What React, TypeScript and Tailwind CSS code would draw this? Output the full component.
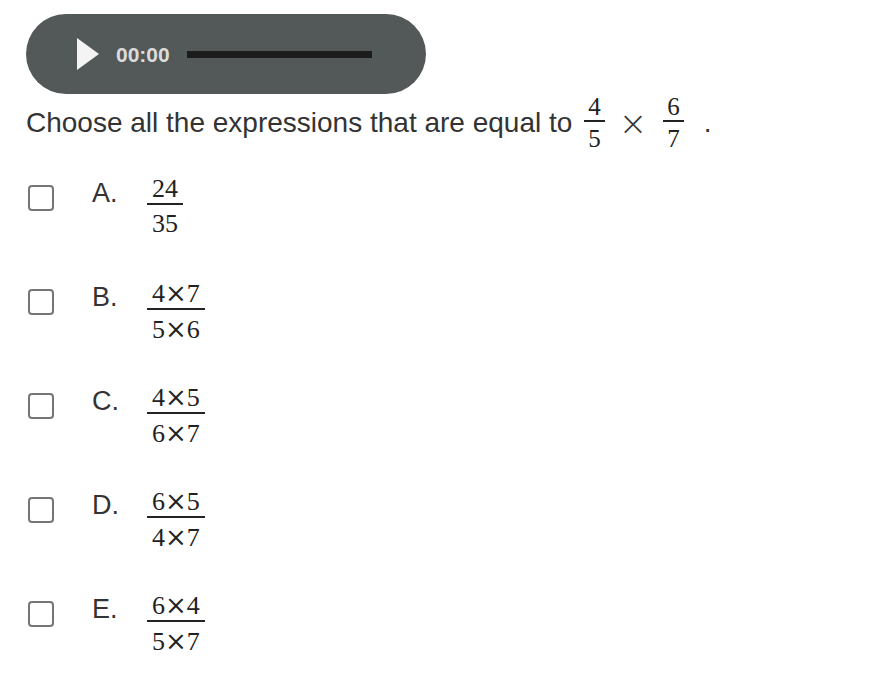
import React from "react";

const serif = { fontFamily: '"Liberation Serif", "Times New Roman", serif' };
const timesFont = { fontFamily: '"DejaVu Serif", serif' };

function Expr({ s }: { s: string }) {
  const parts = s.split("×");
  return (
    <>
      {parts.map((p, i) => (
        <React.Fragment key={i}>
          {i > 0 && <span style={timesFont}>×</span>}
          {p}
        </React.Fragment>
      ))}
    </>
  );
}

function Frac({
  n,
  d,
  size = "text-[26px]",
  lh = "leading-[28px]",
  pad = "px-[5px]",
  gap = "pt-[5px]",
}: {
  n: string;
  d: string;
  size?: string;
  lh?: string;
  pad?: string;
  gap?: string;
}) {
  return (
    <span className={`inline-flex flex-col items-center ${size} ${lh} text-[#222]`} style={serif}>
      <span className={`${pad} border-b-2 border-[#222]`}>
        <Expr s={n} />
      </span>
      <span className={`${pad} ${gap}`}>
        <Expr s={d} />
      </span>
    </span>
  );
}

const options = [
  { l: "A.", n: "24", d: "35" },
  { l: "B.", n: "4×7", d: "5×6" },
  { l: "C.", n: "4×5", d: "6×7" },
  { l: "D.", n: "6×5", d: "4×7" },
  { l: "E.", n: "6×4", d: "5×7" },
];

export default function App() {
  return (
    <div
      className="w-[884px] h-[700px] bg-white pl-[26px] pt-[14px] text-[#333]"
      style={{ fontFamily: '"Liberation Sans", Arial, Helvetica, sans-serif' }}
    >
      <div className="w-[400px] h-[80px] rounded-full bg-[#535859] flex items-center pl-[51px]">
        <svg width="22" height="32" viewBox="0 0 22 32" className="shrink-0">
          <polygon points="0,0 22,16 0,32" fill="#f4f4f4" />
        </svg>
        <span className="ml-[17px] text-[21px] font-bold text-[#dcdcdc] leading-none">00:00</span>
        <div className="ml-[17px] w-[185px] h-[7px] bg-[#1c1c1c]" />
      </div>

      <div className="flex items-center mt-[-1px]">
        <span className="text-[28px] leading-[32px]">Choose all the expressions that are equal to</span>
        <span className="ml-[12px]">
          <Frac n="4" d="5" size="text-[25px]" lh="leading-[27px]" pad="px-[4px]" gap="pt-[3px]" />
        </span>
        <span
          className="ml-[14px] text-[34px] leading-[32px] font-extralight text-[#333]"
          style={{ fontFamily: '"DejaVu Sans", sans-serif' }}
        >
          ×
        </span>
        <span className="ml-[16px]">
          <Frac n="6" d="7" size="text-[25px]" lh="leading-[27px]" pad="px-[4px]" gap="pt-[3px]" />
        </span>
        <span className="ml-[20px] text-[28px] leading-[32px]">.</span>
      </div>

      <div className="mt-[18px] flex flex-col">
        {options.map((o) => (
          <div key={o.l} className="h-[104px] flex items-start">
            <div className="mt-[15px] ml-[2px] w-[26px] h-[26px] rounded-[4px] border-2 border-[#757575] bg-white shrink-0" />
            <span className="ml-[38px] mt-[8px] w-[55px] text-[27px] leading-[30px] text-[#333]">{o.l}</span>
            <span className="mt-[5px]">
              <Frac n={o.n} d={o.d} />
            </span>
          </div>
        ))}
      </div>
    </div>
  );
}
